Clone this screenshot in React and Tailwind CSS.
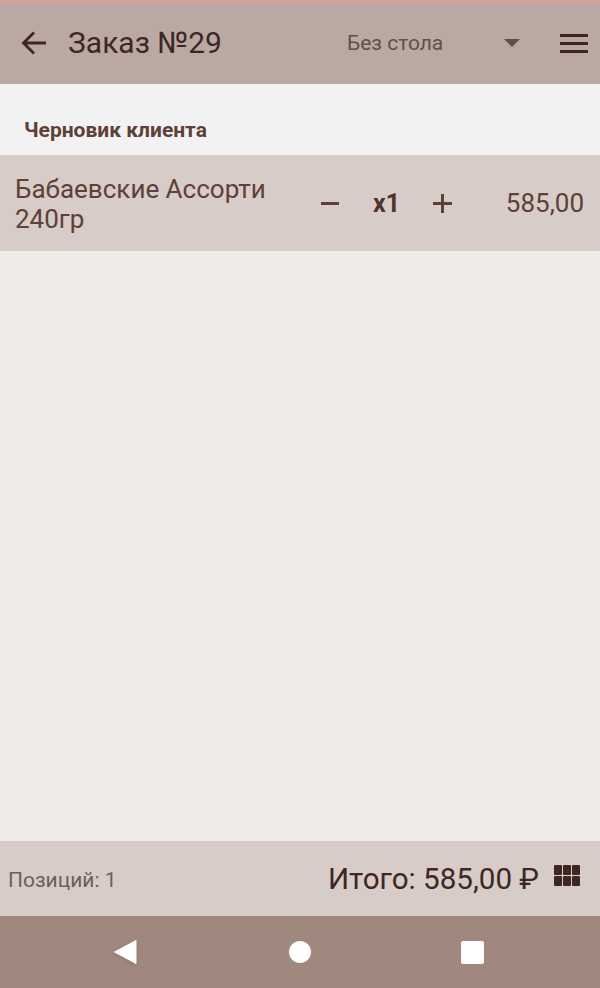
import React from 'react';

function BackIcon() {
  return (
    <svg width="28" height="28" viewBox="0 0 28 28" fill="none" stroke="#3e2723" strokeWidth="2.8" className="shrink-0">
      <path d="M26 14H3.5M14 3.5L3.5 14L14 24.5" />
    </svg>
  );
}

function GridIcon() {
  return (
    <div className="grid grid-cols-3 gap-px w-[26px]">
      {[1, 2, 3, 4, 5, 6].map((n) => (
        <div key={n} className="h-[10px] bg-[#3e2723] rounded-[1px]" />
      ))}
    </div>
  );
}

export default function App() {
  return (
    <div className="w-[600px] h-[988px] flex flex-col bg-[#efebe9] text-[#3e2723] font-['Roboto',sans-serif] overflow-hidden">
      {/* Header */}
      <header className="h-[84px] shrink-0 flex flex-col bg-[#baa9a3]">
        <div className="h-[2px] bg-[#dca293]" />
        <div className="h-[5px] bg-[#bda8a3]" />
        <div className="flex-1 flex items-center pl-[20px] pr-[12px] pb-[5px]">
          <BackIcon />
          <span className="ml-[20px] w-[152px] shrink-0 whitespace-nowrap text-[30px] leading-none">Заказ №29</span>
          <span className="ml-[127px] w-[96px] shrink-0 whitespace-nowrap text-[21px] leading-none text-[#5f4f4a]">Без стола</span>
          <div className="ml-[61px] shrink-0 w-0 h-0 border-x-[8px] border-x-transparent border-t-[8px] border-t-[#5f4f4a]" />
          <div className="ml-[40px] shrink-0 w-[28px] flex flex-col gap-[5px]">
            <div className="h-[3px] bg-[#3e2723]" />
            <div className="h-[3px] bg-[#3e2723]" />
            <div className="h-[3px] bg-[#3e2723]" />
          </div>
        </div>
      </header>

      {/* Section title */}
      <div className="h-[71px] shrink-0 bg-[#f2f2f2] pl-[24px] pt-[34px]">
        <span className="block text-[21px] leading-[24px] font-bold text-[#5d4037]">Черновик клиента</span>
      </div>

      {/* Order row */}
      <div className="h-[96px] shrink-0 bg-[#d7ccc8] flex items-center pl-[15px] pr-[16px] text-[#5d4037]">
        <div className="w-[285px] pt-[2px] text-[26px] leading-[30px]">Бабаевские Ассорти 240гр</div>
        <span className="ml-[21px] w-[18px] h-[3px] bg-[#5d4037]" />
        <span className="ml-[34px] text-[25px] font-bold text-[#4e342e] leading-none">x1</span>
        <span className="ml-[33px] relative w-[19px] h-[19px]">
          <span className="absolute left-0 top-[8px] w-[19px] h-[3px] bg-[#5d4037]" />
          <span className="absolute left-[8px] top-0 w-[3px] h-[19px] bg-[#5d4037]" />
        </span>
        <span className="ml-auto text-[26px] leading-none">585,00</span>
      </div>

      <main className="flex-1" />

      {/* Footer */}
      <footer className="h-[75px] shrink-0 bg-[#d7ccc8] flex items-center pl-[8px] pr-[20px]">
        <span className="pt-[3px] text-[21px] leading-none text-[#6d5f5a]">Позиций: 1</span>
        <span className="ml-auto pt-[2px] text-[29.6px] leading-none text-[#3e2723]">Итого: 585,00 ₽</span>
        <div className="ml-[15px] mb-[6px]">
          <GridIcon />
        </div>
      </footer>

      {/* Android nav bar */}
      <nav className="h-[72px] shrink-0 bg-[#a1887f] flex items-center justify-center pr-[3px]">
        <svg width="24" height="26" viewBox="0 0 24 26" className="drop-shadow-sm">
          <path d="M23 1.5V24.5L1.5 13Z" fill="#fff" stroke="#fff" strokeLinejoin="round" />
        </svg>
        <div className="ml-[152px] w-[22px] h-[22px] rounded-full bg-white" />
        <div className="ml-[150px] w-[23px] h-[23px] rounded-[2px] bg-white" />
      </nav>
    </div>
  );
}
